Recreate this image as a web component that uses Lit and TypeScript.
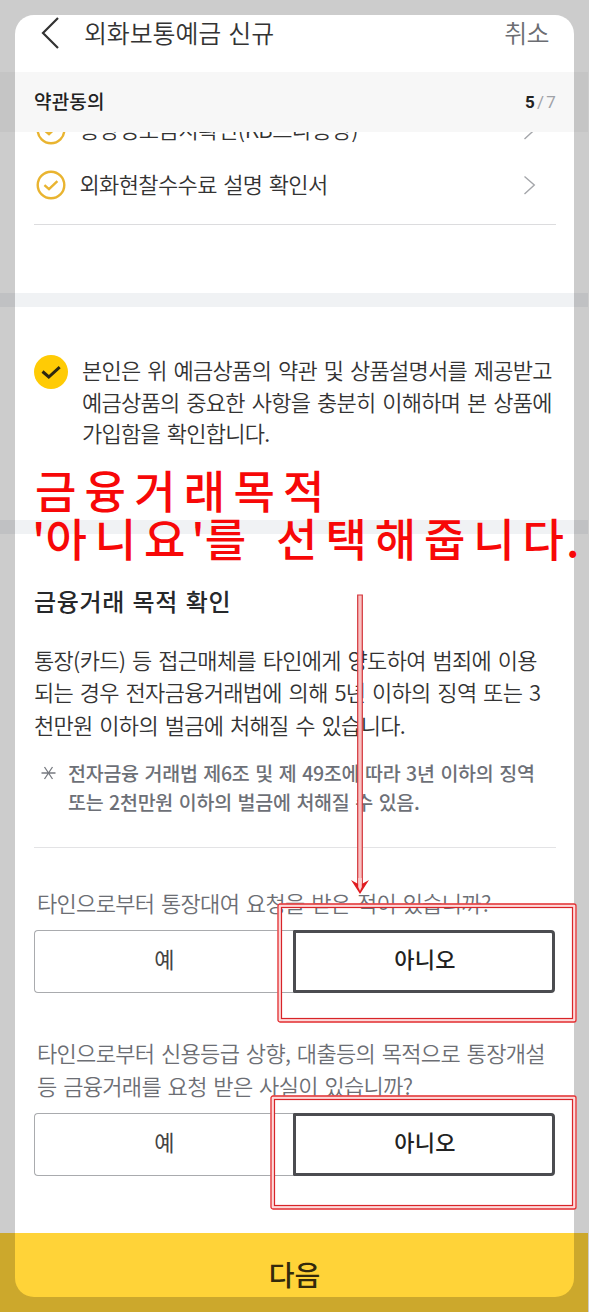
import { LitElement, html, css, svg } from "lit";
import { customElement, property } from "lit/decorators.js";

const chevron = html`<svg class="chev" width="14" height="20" viewBox="0 0 14 20" fill="none">
  <path d="M1.5 1.5 L11.3 10 L1.5 19" stroke="#a4a6aa" stroke-width="1.4" />
</svg>`;

const ringCheck = html`<svg width="30" height="30" viewBox="0 0 30 30" fill="none">
  <circle cx="15" cy="15" r="13.3" stroke="#e9b430" stroke-width="2.4" />
  <path d="M8.4 15.2 L13 19.2 L21.4 11.2" stroke="#e9b430" stroke-width="2.4" />
</svg>`;

@customElement("choice-pair")
class ChoicePair extends LitElement {
  static styles = css`
    :host { display: block; }
    .pair { display: flex; height: 63px; width: 521px; }
    .opt {
      box-sizing: border-box;
      display: flex;
      align-items: center;
      justify-content: center;
      font-size: 22px;
      letter-spacing: 0.2px;
      line-height: 32px;
      padding-bottom: 7px;
    }
    .no-sel { width: 259px; border: 1px solid #a9abae; border-right: 0; border-radius: 4px 0 0 4px; color: #444; padding-left: 1px; }
    .sel { width: 262px; border: 3px solid #4b4c50; border-radius: 1px 4px 4px 1px; color: #222; font-weight: 500; padding-left: 2px; }
  `;
  render() {
    return html`<div class="pair">
      <div class="opt no-sel">예</div>
      <div class="opt sel">아니오</div>
    </div>`;
  }
}

@customElement("red-frame")
class RedFrame extends LitElement {
  @property({ type: Number }) w = 0;
  @property({ type: Number }) h = 0;
  static styles = css`
    :host { display: block; }
    svg { display: block; }
  `;
  render() {
    const { w, h } = this;
    return html`<svg width=${w} height=${h} fill="none">
      ${svg`
      <rect x="2.5" y="2.5" width=${w - 5} height=${h - 5} rx="1.5" stroke="#fddada" stroke-width="4" />
      <rect x="1" y="1" width=${w - 2} height=${h - 2} rx="2" stroke="#e23033" stroke-width="1.3" />
      <rect x="4.5" y="4.5" width=${w - 9} height=${h - 9} stroke="#d82428" stroke-width="1.2" />`}
    </svg>`;
  }
}

@customElement("app-root")
class AppRoot extends LitElement {
  static styles = css`
    :host {
      display: block;
      position: relative;
      width: 589px;
      height: 1312px;
      overflow: hidden;
      background: #fff;
      font-family: "Noto Sans CJK KR", "Noto Sans", sans-serif;
      color: #333;
    }
    * { box-sizing: border-box; }
    svg { display: block; flex: none; }
    .page { display: flex; flex-direction: column; width: 588px; height: 1312px; white-space: nowrap; }
    .top { display: flex; align-items: center; height: 72px; padding: 0 39px 7px 40px; }
    .title { margin-left: 22px; font-size: 25px; font-weight: 350; letter-spacing: -0.15px; word-spacing: 1.8px; flex: 1; line-height: 36px; padding-bottom: 2px; }
    .cancel { font-size: 25px; font-weight: 350; letter-spacing: -0.6px; color: #6b6d72; line-height: 36px; padding-bottom: 2px; }
    .step { display: flex; align-items: center; justify-content: space-between; height: 60px; background: #f7f7f7; padding: 0 32px 4px 34px; }
    .step-name { font-size: 19px; font-weight: 500; letter-spacing: 0.15px; color: #222; }
    .count { font-family: Roboto, sans-serif; font-size: 17px; letter-spacing: 2.2px; color: #a0a2a7; padding-top: 3px; margin-right: -2px; }
    .count b { color: #222; font-weight: 700; }
    .list { height: 93px; overflow: hidden; margin: 0 32px 0 34px; border-bottom: 1px solid #dcdcde; }
    .rows { display: flex; flex-direction: column; margin-top: -30px; }
    .row { display: flex; align-items: center; height: 55px; padding: 0 19px 0 2px; }
    .label { flex: 1; margin-left: 13.5px; font-size: 22px; font-weight: 350; letter-spacing: -0.62px; word-spacing: 2px; line-height: 32px; padding-bottom: 4px; }
    .label.wide { letter-spacing: -0.45px; }
    .band { height: 14px; background: #f0f2f4; flex: none; }
    .b1 { margin-top: 68px; }
    .agree { display: flex; height: 213px; padding: 48px 0 0 34px; }
    .agree .text { margin: -1px 0 0 14px; font-size: 22px; font-weight: 350; letter-spacing: -0.73px; word-spacing: 2.6px; line-height: 31.6px; }
    h2 { margin: 50px 0 0 34px; font-size: 24px; font-weight: 500; letter-spacing: 0.65px; word-spacing: 1.6px; line-height: 34px; color: #26282b; }
    .law { margin: 24.5px 0 0 34px; font-size: 22px; font-weight: 350; letter-spacing: -0.7px; word-spacing: 2.5px; line-height: 32.7px; }
    .note { display: flex; margin: 17.5px 0 0 41px; font-size: 19.5px; letter-spacing: -0.25px; word-spacing: 1.6px; line-height: 29.3px; color: #6d7077; }
    .note svg { margin: 8px 12px 0 0; }
    .note .text { font-weight: 500; }
    .rule { height: 1px; margin: 30px 32px 0 34px; background: #e3e3e5; flex: none; }
    .q { margin: 38px 0 0 37px; font-size: 22px; font-weight: 350; letter-spacing: -0.68px; word-spacing: 2.4px; line-height: 33px; color: #6c6e74; }
    .q2 { margin-top: 43px; }
    choice-pair { margin: 11px 0 0 34px; }
    .next { display: flex; align-items: center; justify-content: center; height: 79px; margin-top: auto; background: #ffd338; color: #33290c; font-size: 28px; font-weight: 500; padding: 2px 0 0 1px; flex: none; }
    .shade { position: absolute; left: 15px; top: 15px; width: 559px; height: 1282px; border-radius: 19px; box-shadow: 0 0 0 40px rgba(0, 0, 0, 0.2); }
    .memo { position: absolute; left: 35px; top: 466px; font-size: 45px; font-weight: 500; line-height: 48px; letter-spacing: 7.9px; word-spacing: 4px; color: #f70808; white-space: pre; }
    .memo .first { letter-spacing: 8.2px; }
    .memo .open { letter-spacing: 0; margin-left: -3px; }
    .memo .close { letter-spacing: 0; margin-left: -2px; }
    .memo .end { letter-spacing: 4px; }
    .arrow { position: absolute; left: 348px; top: 594px; }
    .f1 { position: absolute; left: 277px; top: 903px; }
    .f2 { position: absolute; left: 270px; top: 1095px; }
  `;
  render() {
    return html`
      <div class="page">
        <div class="top">
          <svg width="22" height="34" viewBox="0 0 22 34" fill="none">
            <path d="M18 2 L3 17 L18 32" stroke="#333" stroke-width="2.2" />
          </svg>
          <div class="title">외화보통예금 신규</div>
          <div class="cancel">취소</div>
        </div>
        <div class="step">
          <div class="step-name">약관동의</div>
          <div class="count"><b>5</b>/7</div>
        </div>
        <div class="list">
          <div class="rows">
            <div class="row">${ringCheck}<div class="label wide">통장정보금지확인(KB스타통장)</div>${chevron}</div>
            <div class="row">${ringCheck}<div class="label">외화현찰수수료 설명 확인서</div>${chevron}</div>
          </div>
        </div>
        <div class="band b1"></div>
        <div class="agree">
          <svg width="34" height="34" viewBox="0 0 34 34" fill="none">
            <circle cx="17" cy="17" r="17" fill="#ffcb05" />
            <path d="M8.5 16.5 L14.8 22 L25.7 12.2" stroke="#2d2710" stroke-width="3" />
          </svg>
          <div class="text">
            본인은 위 예금상품의 약관 및 상품설명서를 제공받고<br />예금상품의 중요한 사항을 충분히 이해하며 본 상품에<br />가입함을 확인합니다.
          </div>
        </div>
        <div class="band"></div>
        <h2>금융거래 목적 확인</h2>
        <div class="law">
          통장(카드) 등 접근매체를 타인에게 양도하여 범죄에 이용<br />되는 경우 전자금융거래법에 의해 5년 이하의 징역 또는 3<br />천만원 이하의 벌금에 처해질 수 있습니다.
        </div>
        <div class="note">
          <svg width="15" height="14" viewBox="0 0 15 14">
            <path d="M0.5 7 H14.5 M3.5 1 L11.5 13 M11.5 1 L3.5 13" stroke="#777a80" stroke-width="1.3" />
          </svg>
          <div class="text">전자금융 거래법 제6조 및 제 49조에 따라 3년 이하의 징역<br />또는 2천만원 이하의 벌금에 처해질 수 있음.</div>
        </div>
        <div class="rule"></div>
        <div class="q">타인으로부터 통장대여 요청을 받은 적이 있습니까?</div>
        <choice-pair></choice-pair>
        <div class="q q2">타인으로부터 신용등급 상향, 대출등의 목적으로 통장개설<br />등 금융거래를 요청 받은 사실이 있습니까?</div>
        <choice-pair></choice-pair>
        <div class="next">다음</div>
      </div>
      <div class="shade"></div>
      <div class="memo"><span class="first">금융거래목적</span>
<span class="open">'</span>아니요<span class="close">'</span>를 선택해줍니<span class="end">다</span><span class="close">.</span></div>
      <svg class="arrow" width="24" height="302" viewBox="0 0 24 302">
        <path d="M9.7 1 H14.3 V290 H9.7 Z" fill="#f9c2c2" stroke="#d3353a" stroke-width="1.2" />
        <path d="M3 286 L12 291 L21 286 L12 300 Z" fill="#e01b20" />
        <path d="M10.2 284 H13.8 V293 L12 297 L10.2 293 Z" fill="#fbd0d0" />
      </svg>
      <red-frame class="f1" w="300" h="120"></red-frame>
      <red-frame class="f2" w="307" h="115"></red-frame>
    `;
  }
}
